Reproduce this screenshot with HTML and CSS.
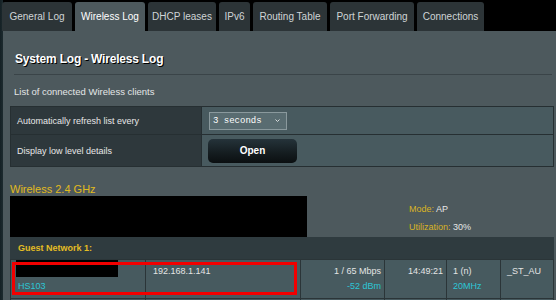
FILE: index.html
```html
<!DOCTYPE html>
<html>
<head>
<meta charset="utf-8">
<title>System Log - Wireless Log</title>
<link rel="stylesheet" href="styles.css">
</head>
<body>
<div class="page">
  <nav class="tabs">
    <div class="tab w70">General Log</div>
    <div class="tab tab-active w70">Wireless Log</div>
    <div class="tab w68">DHCP leases</div>
    <div class="tab w31">IPv6</div>
    <div class="tab w74">Routing Table</div>
    <div class="tab w84">Port Forwarding</div>
    <div class="tab w67">Connections</div>
  </nav>
  <main class="panel">
    <h1 class="title">System Log - Wireless Log</h1>
    <div class="split"></div>
    <p class="desc">List of connected Wireless clients</p>
    <div class="form">
      <div class="flabel r1">Automatically refresh list every</div>
      <div class="fval r1">
        <div class="select">3 seconds<svg class="chev" width="5" height="3" viewBox="0 0 5 3"><polyline points="0.5,0.5 2.5,2.5 4.5,0.5" fill="none" stroke="#d8dcdd" stroke-width="1"/></svg></div>
      </div>
      <div class="flabel r2">Display low level details</div>
      <div class="fval r2"><button class="btn">Open</button></div>
    </div>
    <h2 class="band">Wireless 2.4 GHz</h2>
    <div class="bandinfo">
      <div class="redact-ssid"></div>
      <div class="stats">
        <div><span class="k">Mode:</span> AP</div>
        <div><span class="k">Utilization:</span> 30%</div>
      </div>
    </div>
    <div class="clients">
      <div class="chead">Guest Network 1:</div>
      <div class="crow">
        <div class="cell c1"><div class="redact-name"></div><div class="cyan">HS103</div></div>
        <div class="cell c2">192.168.1.141</div>
        <div class="cell num">1 / 65 Mbps<div class="cyan">-52 dBm</div></div>
        <div class="cell num">14:49:21</div>
        <div class="cell c5">1 (n)<div class="cyan">20MHz</div></div>
        <div class="cell c5">_ST_AU</div>
      </div>
      <div class="crow">
        <div class="cell c1"></div>
        <div class="cell c2"></div>
        <div class="cell num"></div>
        <div class="cell num"></div>
        <div class="cell c5"></div>
        <div class="cell c5"></div>
      </div>
      <div class="highlight"></div>
    </div>
  </main>
</div>
</body>
</html>
```

FILE: styles.css
```css
html, body {
  margin: 0;
  padding: 0;
  background: #000;
}
body {
  font-family: "Liberation Sans", Arial, sans-serif;
  color: #e6e6e6;
  overflow: hidden;
}
.page {
  width: 556px;
  min-height: 300px;
  display: flex;
  flex-direction: column;
  background: linear-gradient(90deg, #142024 0, #1d2b2f 3px, #000 3px);
}
.tabs {
  display: flex;
  gap: 3px;
  padding: 2px 0 0 2px;
  height: 29px;
}
.tab {
  height: 29px;
  line-height: 30px;
  font-size: 10px;
  text-align: center;
  background: #2c3437;
  color: #cfd4d6;
  border-radius: 3px 3px 0 0;
  white-space: nowrap;
}
.tab-active {
  background: #4d595d;
  color: #ffffff;
}
.w70 { width: 70px; }
.w68 { width: 68px; }
.w31 { width: 31px; }
.w74 { width: 74px; }
.w84 { width: 84px; }
.w67 { width: 67px; }

.panel {
  margin-left: 3px;
  background: #4d595d;
  padding: 20px 2px 0 7px;
  flex: 1;
}
.title {
  margin: 0 0 0 5px;
  font-size: 12px;
  line-height: 16px;
  font-weight: bold;
  color: #ffffff;
  letter-spacing: -0.2px;
  text-shadow: 1px 1px 0 #000;
}
.split {
  margin: 7px 2px 0 4px;
  height: 1px;
  background: #3a4448;
}
.desc {
  margin: 11px 0 0 4px;
  font-size: 9.5px;
  line-height: 12px;
  color: #e4e6e7;
}
.form {
  margin-top: 8px;
  display: grid;
  grid-template-columns: 190px 1fr;
  grid-template-rows: 27px 31px;
  gap: 1px;
  padding: 1px;
  background: #262f32;
}
.flabel {
  background: #2e383c;
  font-size: 9px;
  padding-left: 6px;
  display: flex;
  align-items: center;
  color: #e8e8e8;
}
.fval {
  background: #485a5f;
  display: flex;
  align-items: center;
  padding-left: 6px;
}
.select {
  margin-left: 1px;
  width: 78px;
  height: 18px;
  box-sizing: border-box;
  border: 1px solid #8a999d;
  background: #596c71;
  font-family: "Liberation Mono", "Courier New", monospace;
  font-size: 9px;
  color: #ffffff;
  padding-left: 3px;
  display: flex;
  align-items: center;
  white-space: pre;
}
.chev {
  margin-left: auto;
  margin-right: 6px;
}
.btn {
  width: 89px;
  height: 24px;
  border: 0;
  border-radius: 5px;
  background: linear-gradient(180deg, #25333a 0%, #141c1f 60%, #0b0f11 100%);
  color: #ffffff;
  font-family: "Liberation Sans", Arial, sans-serif;
  font-size: 10px;
  font-weight: bold;
  padding: 0;
}
.band {
  margin: 16px 0 0 0;
  font-size: 11px;
  line-height: 13px;
  font-weight: normal;
  color: #e2bb1e;
}
.bandinfo {
  display: grid;
  grid-template-columns: 297px 1fr;
}
.redact-ssid {
  height: 41px;
  background: #000;
}
.stats {
  padding: 4px 0 0 102px;
  font-size: 9px;
  line-height: 18px;
  color: #e6e6e6;
}
.k {
  color: #d9b424;
}
.clients {
  position: relative;
  background: #29333a;
}
.chead {
  height: 22px;
  line-height: 22px;
  background: #2f3b3f;
  padding-left: 8px;
  font-size: 9px;
  font-weight: bold;
  color: #e3bd24;
}
.crow {
  display: grid;
  grid-template-columns: 134px 154px 83px 61px 53px 1fr;
  gap: 1px;
  padding: 1px 1px 0 1px;
  background: #2b3538;
}
.cell {
  background: #475a5f;
  height: 38px;
  box-sizing: border-box;
  padding: 4px 3px 0 7px;
  font-size: 9px;
  line-height: 15px;
  color: #e4e4e4;
  white-space: nowrap;
}
.num {
  text-align: right;
  padding-left: 3px;
}
.c5 {
  padding-left: 6px;
}
.cyan {
  color: #2dc6d6;
}
.redact-name {
  width: 102px;
  height: 17px;
  margin: -4px 0 2px -2px;
  background: #000;
}
.highlight {
  position: absolute;
  left: 2px;
  top: 25px;
  width: 285px;
  height: 33px;
  box-sizing: border-box;
  border: 3px solid #f20000;
}
```
